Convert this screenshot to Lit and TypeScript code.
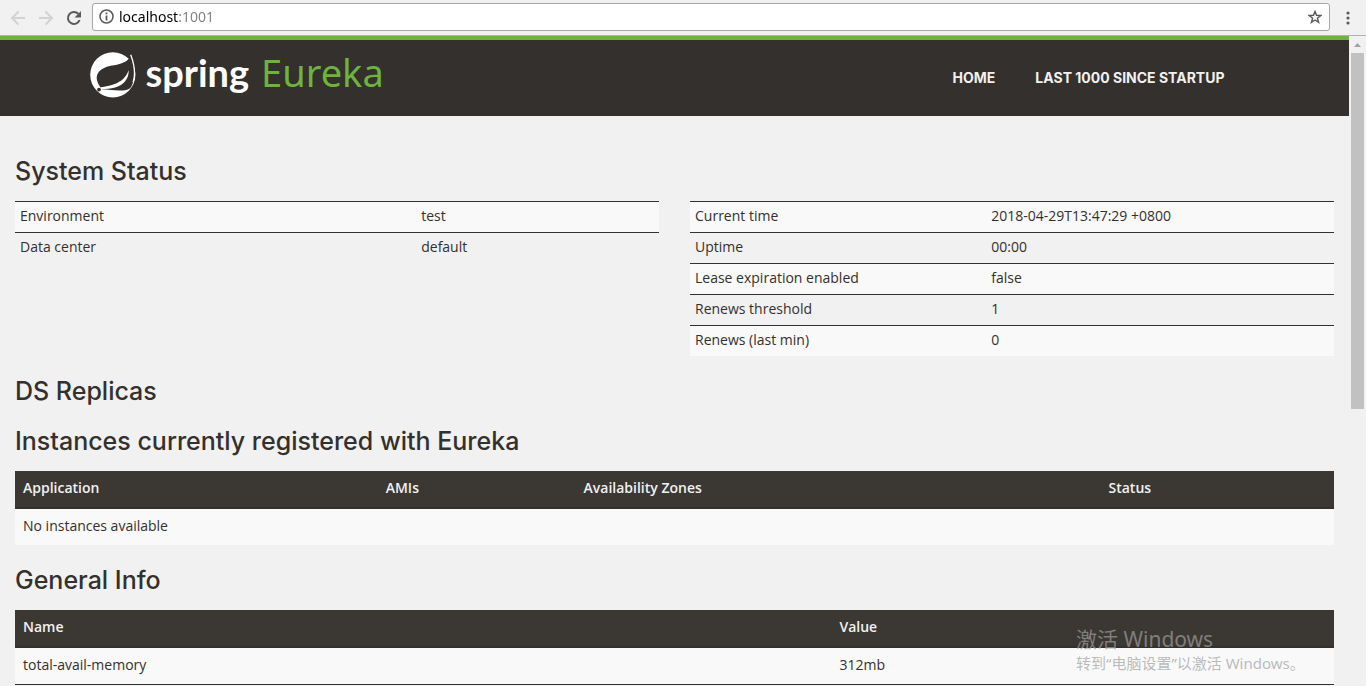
import { LitElement, html, css } from "lit";
import { customElement } from "lit/decorators.js";

@customElement("browser-toolbar")
class BrowserToolbar extends LitElement {
  static styles = css`
    :host {
      display: flex;
      flex: none;
      align-items: center;
      height: 35px;
      border-bottom: 1px solid #b1b1b1;
      background: #f1f1f1;
      color: #5a5a5a;
    }
    button {
      display: flex;
      justify-content: center;
      width: 28px;
      padding: 0;
      border: 0;
      background: none;
      color: inherit;
    }
    button:disabled {
      color: #d2d2d2;
    }
    svg {
      display: block;
      flex: none;
    }
    .nav {
      display: flex;
      flex: none;
      padding: 0 4px;
    }
    .box {
      display: flex;
      flex: 1;
      align-items: center;
      box-sizing: border-box;
      height: 28px;
      margin-top: -2px;
      padding-left: 6px;
      border: 1px solid #a6a6a6;
      border-radius: 3px;
      background: #fff;
    }
    .url {
      flex: 1;
      min-width: 0;
      margin-left: 5px;
      padding: 0;
      border: 0;
      outline: 0;
      font: 14px/20px "Noto Sans", sans-serif;
      color: transparent;
      background: linear-gradient(to right, #000 60px, #808080 60px);
      -webkit-background-clip: text;
      background-clip: text;
    }
    .menu {
      width: 36px;
    }
  `;

  render() {
    return html`
      <div class="nav">
        <button disabled aria-label="Back">
          <svg width="16" height="16" viewBox="0 0 16 16" fill="none" stroke="currentColor" stroke-width="2">
            <path d="M15 8H2.500M8.500 1.500 2 8l6.500 6.500" />
          </svg>
        </button>
        <button disabled aria-label="Forward">
          <svg width="16" height="16" viewBox="0 0 16 16" fill="none" stroke="currentColor" stroke-width="2">
            <path d="M1 8h12.500M7.500 1.500 14 8l-6.500 6.500" />
          </svg>
        </button>
        <button aria-label="Reload">
          <svg width="16" height="16" viewBox="0 0 16 16">
            <path d="M13.600 10A6 6 0 1 1 12.300 3.800" fill="none" stroke="currentColor" stroke-width="2" />
            <path d="M15 1v6.500H8.500z" fill="currentColor" />
          </svg>
        </button>
      </div>
      <div class="box">
        <svg width="15" height="15" viewBox="0 0 15 15">
          <circle cx="7.500" cy="7.500" r="6.500" fill="none" stroke="currentColor" stroke-width="1.500" />
          <path d="M6.600 3.500h1.800v1.800H6.600zM6.600 6.500h1.800v5H6.600z" fill="currentColor" />
        </svg>
        <input class="url" aria-label="Address" value="localhost:1001" />
        <button aria-label="Bookmark">
          <svg width="14" height="14" viewBox="0 0 14 14" fill="none" stroke="currentColor" stroke-width="1.400">
            <path d="M7 1.500 8.500 5.300l4.300.2-3.400 2.700 1.200 4.100L7 10l-3.600 2.300 1.200-4.100L1.200 5.500l4.300-.2z" />
          </svg>
        </button>
      </div>
      <button class="menu" aria-label="Menu">
        <svg width="4" height="14" viewBox="0 0 4 14" fill="currentColor">
          <circle cx="2" cy="2" r="1.600" />
          <circle cx="2" cy="7" r="1.600" />
          <circle cx="2" cy="12" r="1.600" />
        </svg>
      </button>
    `;
  }
}

@customElement("site-header")
class SiteHeader extends LitElement {
  static styles = css`
    :host {
      display: block;
      border-top: 4px solid #6db33f;
      background: #34302d;
    }
    .inner {
      display: flex;
      justify-content: space-between;
      align-items: center;
      box-sizing: border-box;
      max-width: 1170px;
      height: 76px;
      margin: 0 auto;
      padding-right: 15px;
    }
    .brand {
      display: flex;
      align-items: center;
      gap: 10px;
      margin-bottom: 7px;
      font: 38px/42px Lato, sans-serif;
      color: #fff;
      text-decoration: none;
    }
    .name {
      display: flex;
      gap: 12px;
      padding-bottom: 6px;
    }
    .spring {
      font-weight: 700;
    }
    .product {
      font-family: "Noto Sans", sans-serif;
      color: #6db33f;
    }
    nav {
      display: flex;
    }
    .link {
      padding: 20px;
      font: 700 14px/20px Inter, sans-serif;
      color: #f1f1f1;
      text-transform: uppercase;
      text-decoration: none;
    }
  `;

  render() {
    return html`
      <div class="inner">
        <a class="brand" href="#">
          <svg width="46" height="46" viewBox="0 0 46 46" aria-hidden="true">
            <circle cx="22.800" cy="22.800" r="22.600" fill="#fff" />
            <path
              d="M40.700 3.300C39 7 37 9 34 10.300 31 11.800 28 12.600 24 13.200 19 14 16 14.800 12.700 16.700 8 19.500 6 23.500 7 28c.5 2.500 1.300 4.200 2.600 5.900L11.800 37.300C20 37.300 27 39.500 35 38.200c3-.5 5-1.500 6.400-3.700C46 26 44.500 12.500 40.700 3.300z"
              fill="#34302d"
            />
            <path d="M38.700 18C37.500 21.500 36 24.300 33.300 26.700 28.500 31.300 21 34 10.500 35.200v2C22 37.200 30 35 34.500 30 37.600 26.500 38.900 22.500 38.700 18z" fill="#fff" />
            <path d="M40.700 2.800c3 8 5.600 18 2.400 27.500" fill="none" stroke="#fff" stroke-width="1.300" />
            <circle cx="9" cy="37.600" r="1.900" fill="#34302d" />
          </svg>
          <span class="name"><span class="spring">spring</span><span class="product">Eureka</span></span>
        </a>
        <nav>
          <a class="link" href="#">Home</a>
          <a class="link" href="#">Last 1000 since startup</a>
        </nav>
      </div>
    `;
  }
}

@customElement("app-root")
class AppRoot extends LitElement {
  static styles = css`
    :host {
      display: flex;
      flex-direction: column;
      height: 100vh;
      overflow: hidden;
      background: #f1f1f1;
      color: #34302d;
      font: 14px/20px "Open Sans", sans-serif;
    }
    .view {
      display: flex;
      flex: 1;
      min-height: 0;
    }
    .page {
      flex: 1;
      min-width: 0;
      overflow: hidden;
    }
    main {
      padding: 20px 15px;
    }
    h1 {
      margin: 20px 0 15px;
      font: 500 25px/30px Inter, sans-serif;
    }
    .status {
      display: grid;
      grid-template-columns: 1fr 1fr;
      align-items: start;
      gap: 31px;
    }
    table {
      width: 100%;
      border-collapse: separate;
      border-spacing: 0;
      table-layout: fixed;
    }
    td,
    th {
      text-align: left;
    }
    td {
      padding: 4px 5px 6px;
      border-top: 1px solid #34302d;
    }
    tbody tr:nth-child(odd) {
      background: #f9f9f9;
    }
    .data th {
      padding: 7px 8px 9px;
      border-bottom: 2px solid #34302d;
      background: #3b3833;
      color: #f1f1f1;
      font: 600 14px/20px "Open Sans", sans-serif;
    }
    .data td {
      padding: 7px 8px 9px;
      border-top: 0;
    }
    .info td {
      border-bottom: 1px solid #34302d;
    }
    .environment {
      width: 62.3%;
    }
    .runtime {
      width: 46%;
    }
    .application {
      width: 27.5%;
    }
    .amis {
      width: 15%;
    }
    .zones {
      width: 39.8%;
    }
    .key {
      width: 61.9%;
    }
    .scrollbar {
      display: flex;
      flex: none;
      flex-direction: column;
      align-items: center;
      width: 17px;
      background: #f1f1f1;
    }
    .arrow {
      display: block;
      width: 17px;
      height: 17px;
    }
    .thumb {
      width: 13px;
      height: 54.8%;
      background: #c1c1c1;
    }
    .watermark {
      position: absolute;
      right: 60px;
      bottom: 12px;
      width: 230px;
      white-space: nowrap;
      color: rgba(158, 158, 158, 0.7);
      font: 15px/22px "Noto Sans", "Noto Sans CJK SC", sans-serif;
      pointer-events: none;
    }
    .watermark strong {
      display: block;
      font-size: 21px;
      font-weight: 400;
      line-height: 26px;
    }
  `;

  private rows(items: string[][]) {
    return items.map(
      ([name, value]) => html`<tr><td>${name}</td><td>${value}</td></tr>`
    );
  }

  render() {
    return html`
      <browser-toolbar></browser-toolbar>
      <div class="view">
        <div class="page">
          <site-header></site-header>
          <main>
            <h1>System Status</h1>
            <div class="status">
              <table>
                <colgroup><col class="environment" /><col /></colgroup>
                <tbody>
                  ${this.rows([
                    ["Environment", "test"],
                    ["Data center", "default"],
                  ])}
                </tbody>
              </table>
              <table>
                <colgroup><col class="runtime" /><col /></colgroup>
                <tbody>
                  ${this.rows([
                    ["Current time", "2018-04-29T13:47:29 +0800"],
                    ["Uptime", "00:00"],
                    ["Lease expiration enabled", "false"],
                    ["Renews threshold", "1"],
                    ["Renews (last min)", "0"],
                  ])}
                </tbody>
              </table>
            </div>
            <h1>DS Replicas</h1>
            <h1>Instances currently registered with Eureka</h1>
            <table class="data">
              <colgroup><col class="application" /><col class="amis" /><col class="zones" /><col /></colgroup>
              <thead>
                <tr><th>Application</th><th>AMIs</th><th>Availability Zones</th><th>Status</th></tr>
              </thead>
              <tbody>
                <tr><td colspan="4">No instances available</td></tr>
              </tbody>
            </table>
            <h1>General Info</h1>
            <table class="data info">
              <colgroup><col class="key" /><col /></colgroup>
              <thead>
                <tr><th>Name</th><th>Value</th></tr>
              </thead>
              <tbody>
                ${this.rows([["total-avail-memory", "312mb"]])}
              </tbody>
            </table>
          </main>
        </div>
        <div class="scrollbar">
          <svg class="arrow" viewBox="0 0 17 17"><path d="M5 11h7L8.500 7z" fill="#a3a3a3" /></svg>
          <div class="thumb"></div>
        </div>
      </div>
      <div class="watermark"><strong>激活 Windows</strong>转到“电脑设置”以激活 Windows。</div>
    `;
  }
}
